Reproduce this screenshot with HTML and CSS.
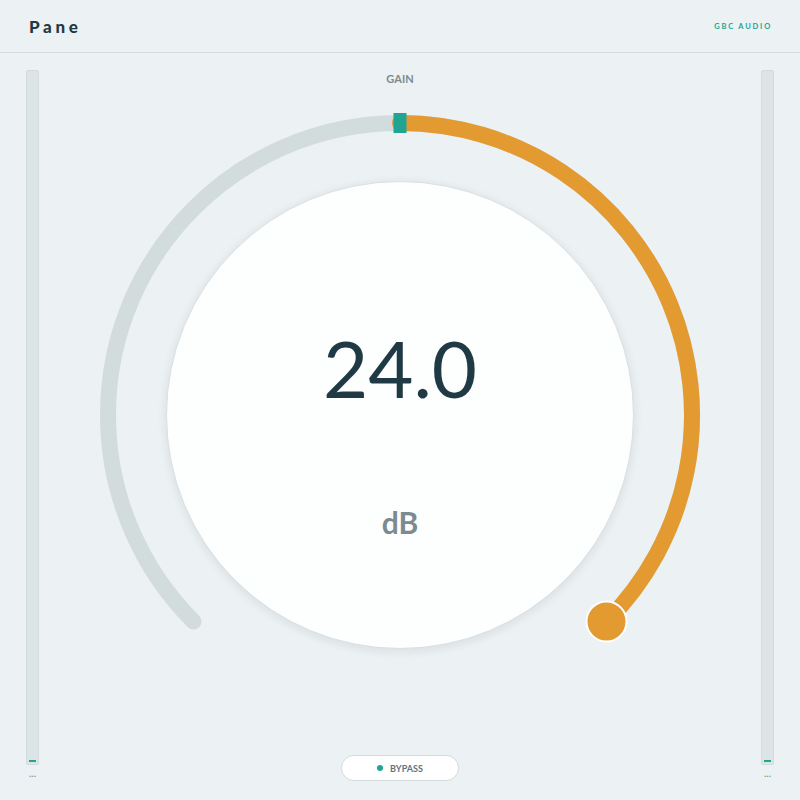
FILE: index.html
```html
<!DOCTYPE html>
<html>
<head>
<meta charset="utf-8">
<link rel="stylesheet" href="styles.css">
</head>
<body>
<div class="app">
  <header class="header">
    <div class="title">Pane</div>
    <div class="brand">GBC AUDIO</div>
  </header>
  <main class="main">
    <div class="meter-col">
      <div class="meter"><div class="meter-fill"></div></div>
      <div class="meter-label">...</div>
    </div>
    <div class="center">
      <div class="label">GAIN</div>
      <div class="dial">
        <svg class="ring" viewBox="0 0 620 620" width="620" height="620">
          <path d="M 103.52 516.48 A 292 292 0 1 1 516.48 516.48" fill="none" stroke="#d3dcdd" stroke-width="16" stroke-linecap="round"/>
          <path d="M 310 18 A 292 292 0 0 1 516.48 516.48" fill="none" stroke="#e39a30" stroke-width="16" stroke-linecap="round"/>
          <rect x="303.5" y="8" width="13" height="20" fill="#22a493"/>
          <circle cx="516.48" cy="516.48" r="20" fill="#e39a30" stroke="#ffffff" stroke-width="2"/>
        </svg>
        <div class="face">
          <div class="value">24.0</div>
          <div class="unit">dB</div>
        </div>
      </div>
      <button class="bypass"><span class="dot"></span>BYPASS</button>
    </div>
    <div class="meter-col">
      <div class="meter"><div class="meter-fill"></div></div>
      <div class="meter-label">...</div>
    </div>
  </main>
</div>
</body>
</html>
```
FILE: styles.css
```css
* { box-sizing: border-box; }
html, body { margin: 0; padding: 0; }
body {
  background: #ecf1f3;
  font-family: Lato, "Open Sans", sans-serif;
  color: #1f3a44;
}
.app {
  width: 800px;
  height: 800px;
  display: flex;
  flex-direction: column;
  overflow: hidden;
}
.header {
  height: 53px;
  flex: none;
  display: flex;
  align-items: center;
  justify-content: space-between;
  padding: 0 28px 0 29px;
  border-bottom: 1px solid #d3dcdd;
}
.title {
  font-size: 17px;
  font-weight: 900;
  letter-spacing: 3.7px;
  color: #1f3a44;
}
.brand {
  font-size: 7.5px;
  font-weight: 700;
  letter-spacing: 1.8px;
  color: #22a493;
}
.main {
  flex: 1;
  display: flex;
  padding: 17px 26px 0 26px;
}
.meter-col {
  width: 13px;
  flex: none;
  display: flex;
  flex-direction: column;
  align-items: center;
}
.meter {
  width: 13px;
  height: 695px;
  background: #dce4e6;
  border: 1px solid #d2dbdd;
  border-radius: 2px;
  display: flex;
  flex-direction: column;
  justify-content: flex-end;
  padding: 0 2px 2px;
}
.meter-fill {
  height: 2px;
  background: #22a493;
}
.meter-label {
  margin-top: 2px;
  font-size: 10px;
  line-height: 12px;
  font-weight: 700;
  color: #8a989c;
}
.center {
  flex: 1;
  display: flex;
  flex-direction: column;
  align-items: center;
  padding-top: 3px;
}
.label {
  font-size: 11px;
  font-weight: 700;
  line-height: 12px;
  color: #7b8b8f;
}
.dial {
  margin-top: 20px;
  width: 620px;
  height: 620px;
  display: grid;
  place-items: center;
}
.ring, .face { grid-area: 1 / 1; }
.face {
  width: 468px;
  height: 468px;
  border-radius: 50%;
  background: #fdfefe;
  border: 1px solid #d8e0e2;
  box-shadow: 0 2px 10px rgba(30, 60, 70, 0.10);
  display: flex;
  flex-direction: column;
  align-items: center;
  padding-top: 146px;
}
.value {
  font-size: 78px;
  line-height: 80px;
  font-weight: 400;
  color: #1f3a44;
}
.unit {
  margin-top: 99px;
  font-size: 30px;
  line-height: 30px;
  font-weight: 700;
  color: #7b8b8f;
}
.bypass {
  margin-top: 30px;
  width: 118px;
  height: 26px;
  border-radius: 13px;
  background: #ffffff;
  border: 1px solid #d3dcdd;
  display: flex;
  align-items: center;
  justify-content: center;
  gap: 7px;
  font-family: Lato, "Open Sans", sans-serif;
  font-size: 9px;
  font-weight: 700;
  color: #62737a;
  padding: 0;
}
.dot {
  width: 6px;
  height: 6px;
  border-radius: 50%;
  background: #22a493;
}
```
